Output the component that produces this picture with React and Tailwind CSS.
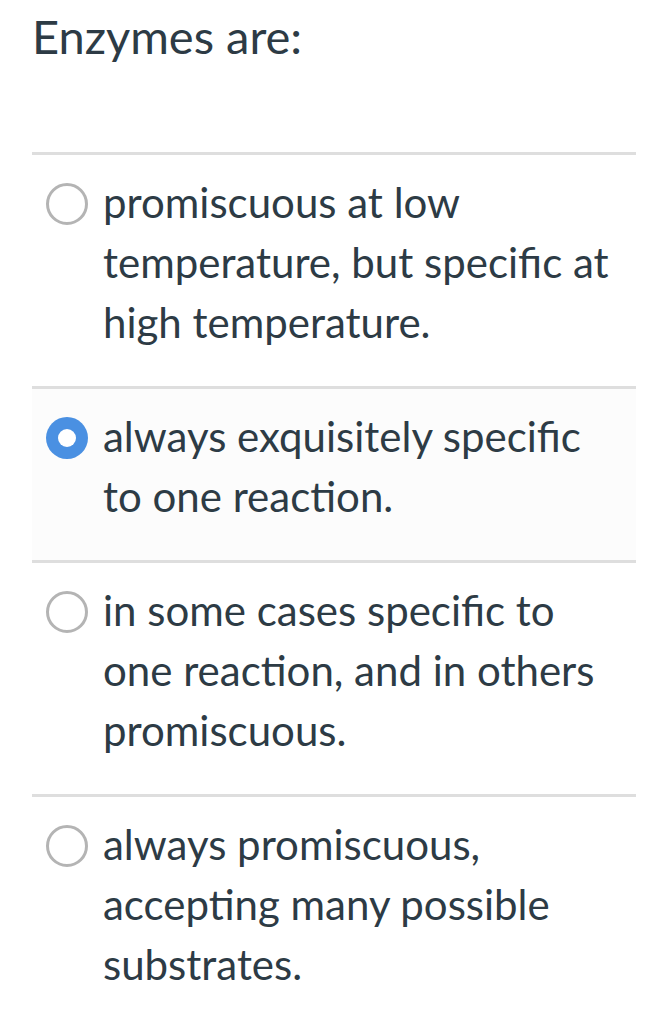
import React from "react";

const options = [
  { id: "a", text: "promiscuous at low temperature, but specific at high temperature." },
  { id: "b", text: "always exquisitely specific to one reaction.", checked: true },
  { id: "c", text: "in some cases specific to one reaction, and in others promiscuous." },
  { id: "d", text: "always promiscuous, accepting many possible substrates." },
];

function Radio({ checked }) {
  if (checked) {
    return (
      <span className="flex h-[42px] w-[42px] shrink-0 items-center justify-center rounded-full bg-[#4a90e2]">
        <span className="h-[18px] w-[18px] rounded-full bg-white" />
      </span>
    );
  }
  return <span className="block h-[42px] w-[42px] shrink-0 rounded-full border-[3px] border-[#b4b4b4] bg-white" />;
}

export default function App() {
  return (
    <div className="min-h-[1022px] bg-white pl-8 pr-3 text-[#2d3b45] font-['Lato',sans-serif]">
      <h1 className="pt-[8px] text-[47px] leading-[56px] font-normal">Enzymes are:</h1>

      <div className="mt-[88px]">
        {options.map((o) => (
          <div key={o.id} className="border-t-[3px] border-[#dedede]">
            <label
              className={`flex items-start gap-[15px] pt-[17px] pb-[34px] pl-[14px] pr-4 ${
                o.checked ? "bg-[#fcfcfc]" : ""
              }`}
            >
              <span className="mt-[11px]">
                <Radio checked={o.checked} />
              </span>
              <span className="text-[42px] leading-[60px]">{o.text}</span>
            </label>
          </div>
        ))}
      </div>
    </div>
  );
}
